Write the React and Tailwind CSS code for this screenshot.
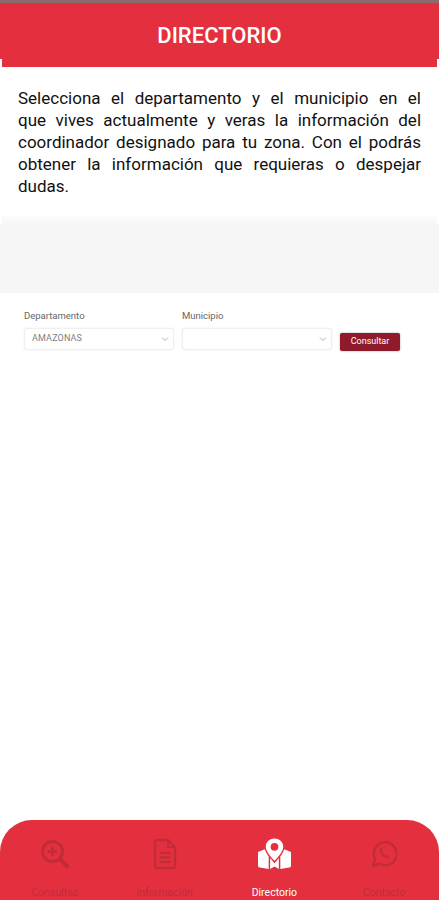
import React from "react";

const Chevron = () => (
  <svg width="8" height="6" viewBox="0 0 8 6" className="shrink-0">
    <path d="M1 1.5 L4 4.5 L7 1.5" fill="none" stroke="#b0b0b0" strokeWidth="1" />
  </svg>
);

const Select = ({ value }) => (
  <div className="w-[150px] h-[22px] flex items-center justify-between pl-[7px] pr-[4px] bg-white rounded-[3px] border border-[#efefef] shadow-[0_0_2px_rgba(0,0,0,0.08)]">
    <span className="text-[9px] text-[#808080] tracking-[0.15px]">{value}</span>
    <Chevron />
  </div>
);

const Search = () => (
  <svg width="30" height="30" viewBox="0 0 30 30" fill="none" stroke="#c22c39" strokeWidth="3">
    <circle cx="12.5" cy="12.5" r="10" />
    <path d="M20 20 L27 27" strokeWidth="4" strokeLinecap="round" />
    <path d="M12.5 8 V17 M8 12.5 H17" strokeWidth="3" />
  </svg>
);

const Doc = () => (
  <svg width="24" height="32" viewBox="0 0 24 32" fill="none" stroke="#c22c39" strokeWidth="2.4">
    <path d="M15 2 H4 Q2 2 2 4 V28 Q2 30 4 30 H20 Q22 30 22 28 V9 Z" strokeLinejoin="round" />
    <path d="M15 2 V9 H22" strokeWidth="2" />
    <path d="M6.5 15 H17.5 M6.5 19.5 H17.5 M6.5 24 H17.5" strokeWidth="2.4" />
  </svg>
);

const MapPin = () => (
  <svg width="33" height="32" viewBox="0 0 34 32" fill="#ffffff">
    <path d="M17 0 C11.5 0 8 4 8 8.5 C8 13 13 19 17 23 C21 19 26 13 26 8.5 C26 4 22.5 0 17 0 Z M17 4.6 A4 4 0 1 1 17 12.6 A4 4 0 1 1 17 4.6 Z" fillRule="evenodd" />
    <path d="M0 14 L7 11 C8 14 10 17 11 18.5 V31.5 L2 30 Q0 30 0 28 Z" />
    <path d="M12.5 20 L17 25.5 L21.5 20 V31.5 L17 29 L12.5 31.5 Z" />
    <path d="M34 14 L27 11 C26 14 24 17 23 18.5 V31.5 L32 30 Q34 30 34 28 Z" />
  </svg>
);

const Whats = () => (
  <svg width="26" height="28" viewBox="0 0 26 28" fill="none" stroke="#c22c39" strokeWidth="2.4">
    <path d="M2 26 L4 19 A11.5 11.5 0 1 1 8.2 23.6 Z" strokeLinejoin="round" />
    <path d="M9 8 C8 11 10 15 13 17 C15 18.5 17 19 18.5 17.5 L16.5 15 L15 16 C13.5 15.5 11.5 13 11 11.5 L12 10.5 L10.5 8 Z" fill="#c22c39" stroke="none" />
  </svg>
);

const NavItem = ({ icon, label, active }) => (
  <div className="flex-1 flex flex-col items-center">
    <div className="h-[36px] flex items-center justify-center">{icon}</div>
    <span className={`mt-[15px] text-[10.5px] leading-[14px] ${active ? "text-[#ffffff]" : "text-[#c22c39]"}`}>{label}</span>
  </div>
);

export default function App() {
  return (
    <div className="relative w-[439px] h-[900px] overflow-hidden bg-white flex flex-col font-['Roboto',sans-serif]">
      <div className="h-[3px] bg-[#8f6a6d]" />
      <header className="h-[56px] bg-[#e4303e] flex items-end justify-center">
        <h1 className="text-[22px] font-medium text-white leading-none mb-[12px]">DIRECTORIO</h1>
      </header>
      <div className="h-[8px] mx-[2px] bg-[#e4303e]" />
      <p className="px-[18px] pt-[20px] text-[17px] leading-[22px] text-[#111111] text-justify h-[149px]">
        Selecciona el departamento y el municipio en el que{"\u00a0"}vives actualmente y veras la información del coordinador designado para tu zona. Con el podrás obtener la información que requieras o despejar dudas.
      </p>
      <div className="h-[8px] mx-[2px] bg-gradient-to-b from-[#fcfcfc] to-[#f6f6f6]" />
      <div className="h-[69px] bg-[#f6f6f6]" />
      <div className="flex items-end px-[24px] pt-[17px] gap-[8px]">
        <div className="flex flex-col gap-[6px]">
          <label className="text-[9.5px] leading-[12px] text-[#666666]">Departamento</label>
          <Select value="AMAZONAS" />
        </div>
        <div className="flex flex-col gap-[6px]">
          <label className="text-[9.5px] leading-[12px] text-[#666666]">Municipio</label>
          <Select value="" />
        </div>
        <button className="mb-[-1px] w-[60px] h-[18px] rounded-[2px] bg-[#8e1a2b] text-white text-[9px] shadow-[0_0_2px_rgba(0,0,0,0.4)]">Consultar</button>
      </div>
      <div className="flex-1" />
      <nav className="h-[80px] bg-[#e4303e] rounded-t-[32px] flex pt-[17px]">
        <NavItem icon={<Search />} label="Consultas" />
        <NavItem icon={<Doc />} label="Información" />
        <NavItem icon={<MapPin />} label="Directorio" active />
        <NavItem icon={<Whats />} label="Contacto" />
      </nav>
    </div>
  );
}
